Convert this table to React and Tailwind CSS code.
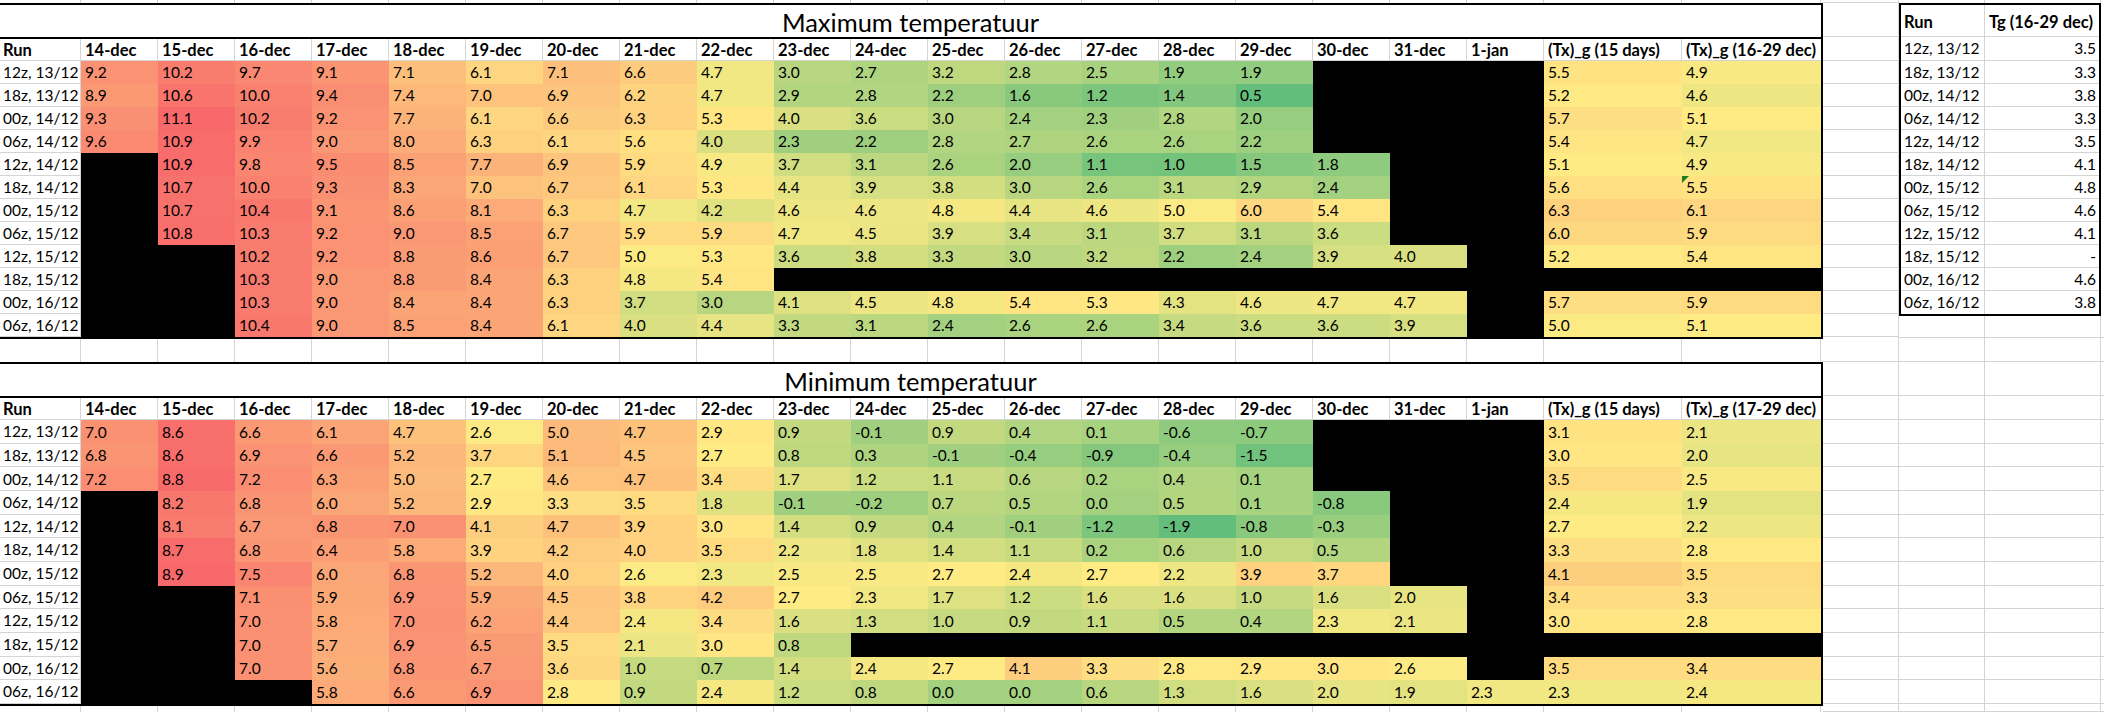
import React from 'react'

const B = null

const DAYS = [
  '14-dec', '15-dec', '16-dec', '17-dec', '18-dec', '19-dec', '20-dec', '21-dec', '22-dec', '23-dec',
  '24-dec', '25-dec', '26-dec', '27-dec', '28-dec', '29-dec', '30-dec', '31-dec', '1-jan',
]

const RUNS = [
  '12z, 13/12', '18z, 13/12', '00z, 14/12', '06z, 14/12', '12z, 14/12', '18z, 14/12',
  '00z, 15/12', '06z, 15/12', '12z, 15/12', '18z, 15/12', '00z, 16/12', '06z, 16/12',
]

// 19 days + (Tx)_g (15 days) + (Tx)_g (x-29 dec); null = black cell
const MAX = [
  [9.2, 10.2, 9.7, 9.1, 7.1, 6.1, 7.1, 6.6, 4.7, 3.0, 2.7, 3.2, 2.8, 2.5, 1.9, 1.9, B, B, B, 5.5, 4.9],
  [8.9, 10.6, 10.0, 9.4, 7.4, 7.0, 6.9, 6.2, 4.7, 2.9, 2.8, 2.2, 1.6, 1.2, 1.4, 0.5, B, B, B, 5.2, 4.6],
  [9.3, 11.1, 10.2, 9.2, 7.7, 6.1, 6.6, 6.3, 5.3, 4.0, 3.6, 3.0, 2.4, 2.3, 2.8, 2.0, B, B, B, 5.7, 5.1],
  [9.6, 10.9, 9.9, 9.0, 8.0, 6.3, 6.1, 5.6, 4.0, 2.3, 2.2, 2.8, 2.7, 2.6, 2.6, 2.2, B, B, B, 5.4, 4.7],
  [B, 10.9, 9.8, 9.5, 8.5, 7.7, 6.9, 5.9, 4.9, 3.7, 3.1, 2.6, 2.0, 1.1, 1.0, 1.5, 1.8, B, B, 5.1, 4.9],
  [B, 10.7, 10.0, 9.3, 8.3, 7.0, 6.7, 6.1, 5.3, 4.4, 3.9, 3.8, 3.0, 2.6, 3.1, 2.9, 2.4, B, B, 5.6, 5.5],
  [B, 10.7, 10.4, 9.1, 8.6, 8.1, 6.3, 4.7, 4.2, 4.6, 4.6, 4.8, 4.4, 4.6, 5.0, 6.0, 5.4, B, B, 6.3, 6.1],
  [B, 10.8, 10.3, 9.2, 9.0, 8.5, 6.7, 5.9, 5.9, 4.7, 4.5, 3.9, 3.4, 3.1, 3.7, 3.1, 3.6, B, B, 6.0, 5.9],
  [B, B, 10.2, 9.2, 8.8, 8.6, 6.7, 5.0, 5.3, 3.6, 3.8, 3.3, 3.0, 3.2, 2.2, 2.4, 3.9, 4.0, B, 5.2, 5.4],
  [B, B, 10.3, 9.0, 8.8, 8.4, 6.3, 4.8, 5.4, B, B, B, B, B, B, B, B, B, B, B, B],
  [B, B, 10.3, 9.0, 8.4, 8.4, 6.3, 3.7, 3.0, 4.1, 4.5, 4.8, 5.4, 5.3, 4.3, 4.6, 4.7, 4.7, B, 5.7, 5.9],
  [B, B, 10.4, 9.0, 8.5, 8.4, 6.1, 4.0, 4.4, 3.3, 3.1, 2.4, 2.6, 2.6, 3.4, 3.6, 3.6, 3.9, B, 5.0, 5.1],
]

const MIN = [
  [7.0, 8.6, 6.6, 6.1, 4.7, 2.6, 5.0, 4.7, 2.9, 0.9, -0.1, 0.9, 0.4, 0.1, -0.6, -0.7, B, B, B, 3.1, 2.1],
  [6.8, 8.6, 6.9, 6.6, 5.2, 3.7, 5.1, 4.5, 2.7, 0.8, 0.3, -0.1, -0.4, -0.9, -0.4, -1.5, B, B, B, 3.0, 2.0],
  [7.2, 8.8, 7.2, 6.3, 5.0, 2.7, 4.6, 4.7, 3.4, 1.7, 1.2, 1.1, 0.6, 0.2, 0.4, 0.1, B, B, B, 3.5, 2.5],
  [B, 8.2, 6.8, 6.0, 5.2, 2.9, 3.3, 3.5, 1.8, -0.1, -0.2, 0.7, 0.5, 0.0, 0.5, 0.1, -0.8, B, B, 2.4, 1.9],
  [B, 8.1, 6.7, 6.8, 7.0, 4.1, 4.7, 3.9, 3.0, 1.4, 0.9, 0.4, -0.1, -1.2, -1.9, -0.8, -0.3, B, B, 2.7, 2.2],
  [B, 8.7, 6.8, 6.4, 5.8, 3.9, 4.2, 4.0, 3.5, 2.2, 1.8, 1.4, 1.1, 0.2, 0.6, 1.0, 0.5, B, B, 3.3, 2.8],
  [B, 8.9, 7.5, 6.0, 6.8, 5.2, 4.0, 2.6, 2.3, 2.5, 2.5, 2.7, 2.4, 2.7, 2.2, 3.9, 3.7, B, B, 4.1, 3.5],
  [B, B, 7.1, 5.9, 6.9, 5.9, 4.5, 3.8, 4.2, 2.7, 2.3, 1.7, 1.2, 1.6, 1.6, 1.0, 1.6, 2.0, B, 3.4, 3.3],
  [B, B, 7.0, 5.8, 7.0, 6.2, 4.4, 2.4, 3.4, 1.6, 1.3, 1.0, 0.9, 1.1, 0.5, 0.4, 2.3, 2.1, B, 3.0, 2.8],
  [B, B, 7.0, 5.7, 6.9, 6.5, 3.5, 2.1, 3.0, 0.8, B, B, B, B, B, B, B, B, B, B, B],
  [B, B, 7.0, 5.6, 6.8, 6.7, 3.6, 1.0, 0.7, 1.4, 2.4, 2.7, 4.1, 3.3, 2.8, 2.9, 3.0, 2.6, B, 3.5, 3.4],
  [B, B, B, 5.8, 6.6, 6.9, 2.8, 0.9, 2.4, 1.2, 0.8, 0.0, 0.0, 0.6, 1.3, 1.6, 2.0, 1.9, 2.3, 2.3, 2.4],
]

const TG = ['3.5', '3.3', '3.8', '3.3', '3.5', '4.1', '4.8', '4.6', '4.1', '-', '4.6', '3.8']

const grid = 'border-[#d4d4d4]'

// column widths of the left sheet area: Run, 19 days, two averages
const colCls = i => (i === 0 ? 'w-[81px]' : i <= 19 ? 'w-[77px]' : i === 20 ? 'w-[138px]' : 'w-[139px]')
const ALL_COLS = Array.from({ length: 22 }, (_, i) => i)

// Excel 3-colour scale: green (low) → yellow (50th percentile) → red (high)
const GREEN = [99, 190, 123]
const YELLOW = [255, 235, 132]
const RED = [248, 105, 107]

function makeScale(rows) {
  const vals = rows.flat().filter(v => v !== null).sort((a, b) => a - b)
  const lo = vals[0]
  const hi = vals[vals.length - 1]
  const r = 0.5 * (vals.length - 1)
  const mid = vals[Math.floor(r)] + (vals[Math.ceil(r)] - vals[Math.floor(r)]) * (r - Math.floor(r))
  return v => {
    const [a, b, t] = v <= mid ? [GREEN, YELLOW, (v - lo) / (mid - lo)] : [YELLOW, RED, (v - mid) / (hi - mid)]
    const c = a.map((x, k) => Math.round(x + (b[k] - x) * t))
    return `rgb(${c[0]}, ${c[1]}, ${c[2]})`
  }
}

// Empty spreadsheet strip showing only the vertical gridlines
function GridStrip({ h }) {
  return (
    <div className={`flex shrink-0 ${h}`}>
      {ALL_COLS.map(i => (
        <div key={i} className={`${colCls(i)} shrink-0 border-r ${grid}`} />
      ))}
    </div>
  )
}

function TempTable({ title, lastHeader, rows, rowH, flag }) {
  const color = makeScale(rows)
  const headers = ['Run', ...DAYS, '(Tx)_g (15 days)', lastHeader]

  return (
    <div className="w-[1823px] border-t-2 border-r-2 border-b-2 border-black">
      {/* Title */}
      <div className="h-[32px] flex items-center justify-center pt-[3px] text-[25.5px] text-black">
        {title}
      </div>

      {/* Header row */}
      <div className="flex h-[24px] border-t-2 border-black text-[16.5px] font-bold">
        {headers.map((h, i) => (
          <div
            key={i}
            className={`${colCls(i)} shrink-0 flex items-center pt-[1px] overflow-hidden whitespace-nowrap ${
              i === 0 ? 'pl-[3px]' : 'pl-[4px]'
            } ${i < 21 ? `border-r ${grid}` : ''} border-b ${grid}`}
          >
            {h}
          </div>
        ))}
      </div>

      {/* Data rows */}
      {rows.map((row, r) => (
        <div key={r} className={`flex ${rowH}`}>
          <div className={`w-[81px] shrink-0 flex items-center pt-[1px] pl-[3px] whitespace-nowrap border-r border-b ${grid}`}>
            {RUNS[r]}
          </div>
          {row.map((v, c) => (
            <div
              key={c}
              className={`${colCls(c + 1)} shrink-0 relative flex items-center pt-[1px] pl-[4px]`}
              style={{ backgroundColor: v === null ? '#000' : color(v) }}
            >
              {v !== null && v.toFixed(1)}
              {flag && flag[0] === r && flag[1] === c && (
                <svg className="absolute left-0 top-0 w-[7px] h-[7px]" viewBox="0 0 7 7">
                  <polygon points="0,0 7,0 0,7" fill="#1e7e1e" />
                </svg>
              )}
            </div>
          ))}
        </div>
      ))}
    </div>
  )
}

// Row heights of the whole sheet, used by the empty columns on the right
const SHEET_ROWS = [
  'h-[3px]', 'h-[34px]', 'h-[24px]',
  ...Array(12).fill('h-[23px]'),
  'h-[25px]', 'h-[34px]', 'h-[24px]',
  ...Array(12).fill('h-[23.67px]'),
  'flex-1',
]

const RIGHT_BELOW = ['h-[22px]', 'h-[24px]', 'h-[34px]', 'h-[24px]', ...Array(12).fill('h-[23.67px]'), 'flex-1']

function FillerRow({ h }) {
  return (
    <div className={`flex shrink-0 ${h}`}>
      <div className={`w-[86px] shrink-0 border-r border-b ${grid}`} />
      <div className={`w-[116px] shrink-0 border-r border-b ${grid}`} />
      <div className={`flex-1 border-b ${grid}`} />
    </div>
  )
}

function TgTable() {
  return (
    <div className="w-[202px] border-2 border-black">
      <div className={`flex h-[32px] text-[16.5px] font-bold border-b ${grid}`}>
        <div className={`w-[84px] shrink-0 flex items-center pt-[3px] pl-[3px] border-r ${grid}`}>Run</div>
        <div className="flex-1 flex items-center pt-[3px] pl-[4px] whitespace-nowrap overflow-hidden">Tg (16-29 dec)</div>
      </div>
      {RUNS.map((run, i) => (
        <div key={run} className={`flex ${i === 0 ? 'h-[24px]' : 'h-[23px]'} ${i < 11 ? `border-b ${grid}` : ''}`}>
          <div className={`w-[84px] shrink-0 flex items-center pt-[1px] pl-[3px] whitespace-nowrap border-r ${grid}`}>
            {run}
          </div>
          <div className="flex-1 flex items-center justify-end pt-[1px] pr-[3px]">{TG[i]}</div>
        </div>
      ))}
    </div>
  )
}

export default function App() {
  return (
    <div className="w-[2104px] h-[712px] overflow-hidden bg-white flex text-[15.5px] text-black font-['Lato','Noto_Sans',sans-serif]">
      {/* Left: the two temperature tables */}
      <div className="w-[1823px] shrink-0 flex flex-col">
        <GridStrip h="h-[3px]" />
        <TempTable title="Maximum temperatuur" lastHeader="(Tx)_g (16-29 dec)" rows={MAX} rowH="h-[23px]" flag={[5, 20]} />
        <GridStrip h="h-[23px]" />
        <TempTable title="Minimum temperatuur" lastHeader="(Tx)_g (17-29 dec)" rows={MIN} rowH="h-[23.67px]" />
        <div className="flex-1 flex">
          {ALL_COLS.map(i => (
            <div key={i} className={`${colCls(i)} shrink-0 border-r ${grid}`} />
          ))}
        </div>
      </div>

      {/* Empty column */}
      <div className="w-[76px] shrink-0 flex flex-col">
        {SHEET_ROWS.map((h, i) => (
          <div key={i} className={`${h} shrink-0 border-r border-b ${grid}`} />
        ))}
      </div>

      {/* Right: Tg table */}
      <div className="flex-1 flex flex-col">
        <div className="flex h-[3px] shrink-0">
          <div className={`w-[86px] shrink-0 border-r ${grid}`} />
          <div className={`w-[116px] shrink-0 border-r ${grid}`} />
        </div>
        <TgTable />
        {RIGHT_BELOW.map((h, i) => (
          <FillerRow key={i} h={h} />
        ))}
      </div>
    </div>
  )
}
